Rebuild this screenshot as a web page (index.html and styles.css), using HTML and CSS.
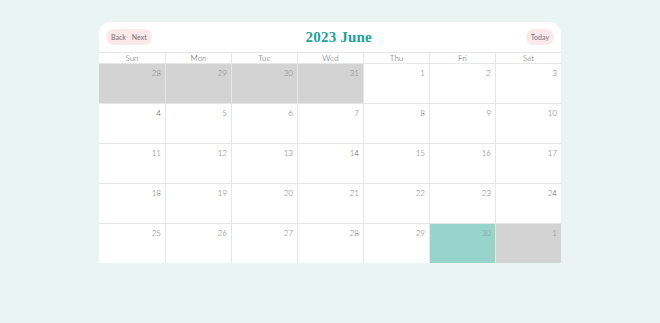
FILE: index.html
```html
<!DOCTYPE html>
<html>
<head>
<meta charset="utf-8">
<link rel="stylesheet" href="styles.css">
</head>
<body>
<div class="card">
  <div class="toolbar">
    <div class="btn-group">
      <span class="btn">Back</span>
      <span class="btn">Next</span>
    </div>
    <div class="title">2023 June</div>
    <div class="btn-group">
      <span class="btn">Today</span>
    </div>
  </div>
  <div class="grid heads">
    <div class="head">Sun</div><div class="head">Mon</div><div class="head">Tue</div><div class="head">Wed</div><div class="head">Thu</div><div class="head">Fri</div><div class="head">Sat</div>
  </div>
  <div class="grid week">
    <div class="cell off">28</div><div class="cell off">29</div><div class="cell off">30</div><div class="cell off">31</div><div class="cell">1</div><div class="cell">2</div><div class="cell">3</div>
  </div>
  <div class="grid week">
    <div class="cell">4</div><div class="cell">5</div><div class="cell">6</div><div class="cell">7</div><div class="cell">8</div><div class="cell">9</div><div class="cell">10</div>
  </div>
  <div class="grid week">
    <div class="cell">11</div><div class="cell">12</div><div class="cell">13</div><div class="cell">14</div><div class="cell">15</div><div class="cell">16</div><div class="cell">17</div>
  </div>
  <div class="grid week">
    <div class="cell">18</div><div class="cell">19</div><div class="cell">20</div><div class="cell">21</div><div class="cell">22</div><div class="cell">23</div><div class="cell">24</div>
  </div>
  <div class="grid week">
    <div class="cell">25</div><div class="cell">26</div><div class="cell">27</div><div class="cell">28</div><div class="cell">29</div><div class="cell today">30</div><div class="cell off">1</div>
  </div>
</div>
</body>
</html>
```

FILE: styles.css
```css
html, body {
  margin: 0;
  padding: 0;
}
body {
  background: #eaf5f3;
  font-family: "Lato", "Noto Sans", sans-serif;
  padding-top: 22px;
  height: 323px;
  box-sizing: border-box;
}
.card {
  width: 462px;
  margin: 0 auto;
  background: #ffffff;
  border-radius: 12px 12px 0 0;
}
.toolbar {
  height: 30px;
  display: flex;
  align-items: center;
  justify-content: space-between;
  padding: 0 7px;
}
.btn-group {
  display: flex;
  background: #fde8eb;
  border-radius: 8px;
  padding: 0 2px;
  height: 16px;
  align-items: center;
}
.btn {
  font-size: 7px;
  color: #6f6f6f;
  padding: 0 3px;
  font-weight: 400;
}
.title {
  font-family: "Liberation Serif", serif;
  font-weight: 700;
  font-size: 15px;
  color: #1ba39b;
  letter-spacing: 0.2px;
}
.grid {
  display: grid;
  grid-template-columns: repeat(7, 66px);
  border-top: 1px solid #e6e6e6;
}
.head {
  height: 10px;
  font-size: 8px;
  line-height: 10px;
  color: #555555;
  font-weight: 300;
  text-align: center;
  border-left: 1px solid #e6e6e6;
}
.head:first-child, .cell:first-child {
  border-left: none;
}
.cell {
  height: 39px;
  border-left: 1px solid #e6e6e6;
  font-size: 8px;
  color: #666666;
  font-weight: 300;
  text-align: right;
  padding: 4px 4px 0 0;
  box-sizing: border-box;
}
.off {
  background: #d3d3d3;
  color: #808080;
}
.today {
  background: #97d4cc;
  color: #7a9e9a;
}
```
